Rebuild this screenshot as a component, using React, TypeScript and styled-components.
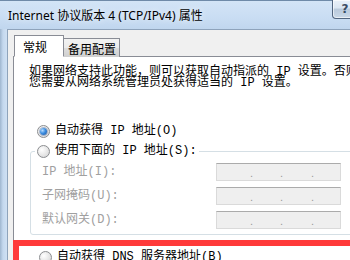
import * as React from "react";
import styled, { createGlobalStyle } from "styled-components";

const GlobalStyle = createGlobalStyle`
  html, body {
    margin: 0;
    padding: 0;
    width: 350px;
    height: 260px;
    overflow: hidden;
    background: #f0f0f0;
  }
`;

const UI_FONT = `"Segoe UI", "Noto Sans", "Noto Sans CJK SC", sans-serif`;
const DIALOG_FONT = `"Liberation Mono", "Noto Sans CJK SC", monospace`;

const Window = styled.div`
  width: 410px;
  height: 260px;
  display: flex;
  flex-direction: column;
  background: linear-gradient(90deg, #9fb6cf 0px, #c4d8ee 3px, #cfe0f3 7px, #d9e8f7 60%, #cddff2 100%);
  overflow: hidden;
`;

const TitleBar = styled.div`
  height: 29px;
  flex: none;
  display: flex;
  align-items: flex-start;
  background: linear-gradient(180deg, #d3e4f6 0%, #c9ddf3 60%, #c0d6ee 100%);
  border-top: 1px solid #6f8aa8;
  box-sizing: border-box;
`;

const Title = styled.div`
  flex: 1;
  padding: 8px 0 0 8px;
  font-family: ${UI_FONT};
  font-size: 12px;
  line-height: 14px;
  color: #000;
  text-shadow: 0 0 6px rgba(255, 255, 255, 0.9);
  white-space: nowrap;
`;

const CaptionButtons = styled.div`
  display: flex;
  margin-right: 9px;
  margin-top: -1px;
`;

const CaptionButton = styled.div<{ $wide?: boolean }>`
  width: ${(p) => (p.$wide ? 43 : 26)}px;
  height: 19px;
  box-sizing: border-box;
  border: 1px solid #51657f;
  border-top: none;
  border-left-width: ${(p) => (p.$wide ? 0 : 1)}px;
  border-radius: ${(p) => (p.$wide ? "0 0 4px 0" : "0 0 0 4px")};
  background: linear-gradient(180deg, #e9f0f8 0%, #dbe6f2 45%, #b9c9db 50%, #c9d8e8 100%);
  box-shadow: inset 0 0 0 1px rgba(255, 255, 255, 0.6);
  display: flex;
  justify-content: center;
  align-items: center;
  font-family: "DejaVu Sans", sans-serif;
  font-weight: bold;
  font-size: 12px;
  color: #3a4c63;
`;

const ClientArea = styled.div`
  flex: 1;
  margin-left: 7px;
  display: flex;
  flex-direction: column;
  background: #f0f0f0;
  border-top: 1px solid #8ea3bb;
  border-left: 1px solid #8ea3bb;
  padding: 5px 0 0 5px;
  min-height: 0;
`;

const TabStrip = styled.div`
  display: flex;
  align-items: flex-end;
  padding-left: 1px;
  height: 22px;
  margin-bottom: -1px;
  position: relative;
  z-index: 1;
`;

const Tab = styled.div<{ $active?: boolean }>`
  height: ${(p) => (p.$active ? 22 : 19)}px;
  box-sizing: border-box;
  padding: ${(p) => (p.$active ? "2px 0 0 8px" : "1px 0 0 4px")};
  border: 1px solid #898c95;
  border-bottom: ${(p) => (p.$active ? "1px solid #fff" : "none")};
  border-left-width: ${(p) => (p.$active ? 1 : 0)}px;
  background: ${(p) =>
    p.$active ? "#fff" : "linear-gradient(180deg, #f2f2f2 0%, #ebebeb 50%, #dddddd 51%, #cfcfcf 100%)"};
  font-family: "Noto Sans CJK SC", sans-serif;
  font-size: 12px;
  line-height: 17px;
  color: #000;
  white-space: nowrap;
  width: ${(p) => (p.$active ? 50 : 56)}px;
`;

const Panel = styled.div`
  flex: 1;
  background: #fff;
  border: 1px solid #898c95;
  border-right: none;
  display: flex;
  flex-direction: column;
  padding: 10px 40px 0 0;
  font-family: ${DIALOG_FONT};
  font-size: 12px;
  color: #000;
`;

const Intro = styled.p`
  margin: 0 0 0 15px;
  line-height: 11px;
  white-space: nowrap;
`;

const RadioRow = styled.label<{ $disabled?: boolean }>`
  display: flex;
  align-items: center;
  gap: 5px;
  height: 14px;
  line-height: 14px;
  white-space: nowrap;
  color: ${(p) => (p.$disabled ? "#a0a0a0" : "#000")};
`;

const AutoIpRow = styled(RadioRow)`
  margin: 35px 0 0 23px;
`;

const RadioDot = styled.span<{ $checked?: boolean }>`
  width: 13px;
  height: 13px;
  flex: none;
  box-sizing: border-box;
  border-radius: 50%;
  border: 1px solid #8b8d90;
  background: radial-gradient(circle at 35% 35%, #ffffff 0%, #e6e6e6 55%, #cfd0d2 100%);
  display: flex;
  align-items: center;
  justify-content: center;

  &::after {
    content: "";
    display: ${(p) => (p.$checked ? "block" : "none")};
    width: 7px;
    height: 7px;
    border-radius: 50%;
    background: radial-gradient(circle at 35% 35%, #b6dbff 0%, #3c8ee0 45%, #1a4f9c 100%);
    box-shadow: 0 0 0 1px rgba(40, 80, 140, 0.35);
  }
`;

const GroupBox = styled.fieldset`
  margin: 6px 0 0 16px;
  padding: 5px 0 5px 0;
  border: 1px solid #d5dfe5;
  border-radius: 3px;
  min-width: 0;
`;

const GroupLegend = styled.legend`
  padding: 0 2px 0 2px;
  margin-left: 4px;
`;

const FieldGrid = styled.div`
  display: grid;
  grid-template-columns: 185px 125px;
  row-gap: 6px;
  align-items: center;
`;

const FieldLabel = styled.span`
  padding-left: 11px;
  color: #a0a0a0;
  white-space: nowrap;
  line-height: 14px;
`;

const IpBox = styled.div`
  height: 18px;
  box-sizing: border-box;
  border: 1px solid #dadada;
  border-top-color: #ababab;
  background: #efefef;
  display: grid;
  grid-template-columns: 34px 30px 31px 1fr;
`;

const IpSegment = styled.span<{ $dot?: boolean }>`
  position: relative;
  &::after {
    content: "${(p) => (p.$dot ? "." : "")}";
    position: absolute;
    right: -2px;
    bottom: 1px;
    font-family: "Liberation Sans", sans-serif;
    font-size: 11px;
    line-height: 11px;
    color: #9a9a9a;
  }
`;

const Highlight = styled.div`
  margin: 5px 0 0 -1px;
  border: 6px solid #ff3a3a;
  border-right: none;
  border-bottom: none;
  background: #fff;
  padding: 4px 0 10px 20px;
`;

const fields = ["IP 地址(I):", "子网掩码(U):", "默认网关(D):"];

function IpAddressField() {
  return (
    <IpBox>
      <IpSegment $dot />
      <IpSegment $dot />
      <IpSegment $dot />
      <IpSegment />
    </IpBox>
  );
}

export default function App() {
  return (
    <>
      <GlobalStyle />
      <Window>
        <TitleBar>
          <Title>Internet 协议版本 4 (TCP/IPv4) 属性</Title>
          <CaptionButtons>
            <CaptionButton>?</CaptionButton>
            <CaptionButton $wide>✕</CaptionButton>
          </CaptionButtons>
        </TitleBar>
        <ClientArea>
          <TabStrip>
            <Tab $active>常规</Tab>
            <Tab>备用配置</Tab>
          </TabStrip>
          <Panel>
            <Intro>
              如果网络支持此功能，则可以获取自动指派的 IP 设置。否则，
              <br />
              您需要从网络系统管理员处获得适当的 IP 设置。
            </Intro>
            <AutoIpRow>
              <RadioDot $checked />
              自动获得 IP 地址(O)
            </AutoIpRow>
            <GroupBox>
              <GroupLegend>
                <RadioRow>
                  <RadioDot />
                  使用下面的 IP 地址(S):
                </RadioRow>
              </GroupLegend>
              <FieldGrid>
                {fields.map((f) => (
                  <React.Fragment key={f}>
                    <FieldLabel>{f}</FieldLabel>
                    <IpAddressField />
                  </React.Fragment>
                ))}
              </FieldGrid>
            </GroupBox>
            <Highlight>
              <RadioRow>
                <RadioDot />
                自动获得 DNS 服务器地址(B)
              </RadioRow>
            </Highlight>
          </Panel>
        </ClientArea>
      </Window>
    </>
  );
}
